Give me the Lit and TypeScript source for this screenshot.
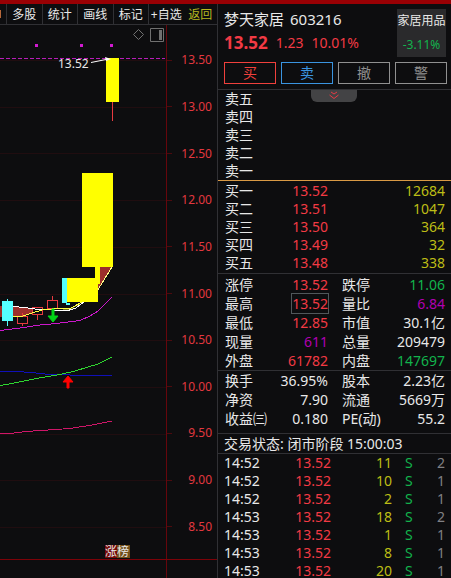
import { LitElement, html, css, svg } from "lit";
import { customElement } from "lit/decorators.js";

const SCALE = ["13.50", "13.00", "12.50", "12.00", "11.50", "11.00", "10.50", "10.00", "9.50", "9.00", "8.50"];

@customElement("price-chart")
class PriceChart extends LitElement {
  static styles = css`
    :host { display: flex; flex: 1; min-height: 0; }
    .plot { flex: 1; min-width: 0; display: block; height: 100%; }
    .axis {
      flex: none; width: 50px; box-sizing: content-box; border-left: 1px solid #66060c;
      display: flex; flex-direction: column; padding: 12px 0 9px; margin: 0; list-style: none;
    }
    .level {
      flex: 1; display: flex; align-items: center; justify-content: space-between;
      padding-right: 5px; color: #e2383f; font-size: 12px; line-height: 16px;
    }
    .level::before { content: ""; width: 5px; height: 1px; background: #4c0a0e; }
    text { font-size: 12px; fill: #e8e8e8; }
  `;
  render() {
    return html`
      <svg class="plot" viewBox="0 25 166 534" role="img" aria-label="K线图">
        <g stroke="#200d10">
          ${SCALE.map((_, i) => svg`<line x1="0" x2="166" y1=${Math.round(60 + i * 46.7) + 0.5} y2=${Math.round(60 + i * 46.7) + 0.5}></line>`)}
        </g>
        <g fill="none" stroke="#707070">
          <path d="M138.5 29.5l5 5-5 5-5-5z"></path>
          <path d="M150.5 28.5h13v13h-13z"></path>
          <path d="M159 30h3v10h-3z" fill="#707070" stroke="none"></path>
        </g>
        <path d="M0 58.5H165" stroke="#b81cb8" stroke-dasharray="4 2"></path>
        <path d="M35 44h3v3h-3zM80 44h3v3h-3zM110 44h3v3h-3z" fill="#d21ad2"></path>
        <path d="M112.5 102V121" stroke="#e83a40"></path>
        <path d="M106 58h13v44h-13z" fill="#ff0"></path>
        <text x="58" y="68">13.52</text>
        <path d="M91 62.5L106 59.5" stroke="#fff"></path>
        <path d="M105 57l6 2-5 2z" fill="#fff"></path>

        <g shape-rendering="crispEdges">
          <path d="M0 306L13 307 25 308 43 310 22 316 0 317z" fill="#9c2f2b"></path>
          <path d="M55 309L72 308 84 302 70 310z" fill="#6c7017"></path>
          <path d="M100 267H112L98 289z" fill="#9c2f2b"></path>
          <path d="M7.5 299V326" stroke="#54ffff"></path>
          <path d="M2 301h11v20h-11z" fill="#54ffff"></path>
          <g fill="#0d0d0f" stroke="#e83a40">
            <path d="M22.5 313V326M37.5 314V320M52.5 296V300"></path>
            <path d="M17.5 316.5h10v7h-10zM32.5 307.5h10v7h-10zM47.5 300.5h10v8h-10z"></path>
          </g>
          <path d="M13 306.500L25 307.500 38 309.500 68 310.500 76 308 84 302" fill="none" stroke="#fff"></path>
          <path d="M13 317L23 316 32 313 44 309.500 60 308.500 70 308.500 84 301" fill="none" stroke="#ff4"></path>
          <path d="M98 289.500L112 267" stroke="#ff8"></path>
          <path d="M62 278h5v25h-5zM66 303h4v2h-4z" fill="#54ffff"></path>
          <path d="M82 173h31v94h-13v17h-2v18h-31v-24h28v-11h-13z" fill="#ff0"></path>
          <path d="M0 330.500L20 328 40 325 56 323.500 80 320.500 90 316 98 311 112 297" fill="none" stroke="#cb18cb"></path>
          <path d="M0 371.500H18L36 373 50 374.500H60L80 375.500H112" fill="none" stroke="#1010b8"></path>
          <path d="M0 385.500L12 383.500 36 378.500 60 374.500 75 371 98 364 112 357" fill="none" stroke="#2fd62f"></path>
          <path d="M0 433.500H10L26 431.500 70 428.500 92 425 112 421" fill="none" stroke="#cf1668"></path>
        </g>
        <path d="M52 309h2v7h4l-5 6-5-6h4z" fill="#00d416" stroke="#00d416"></path>
        <path d="M68 376l5 6h-4v6h-2v-6h-4z" fill="#f00" stroke="#f00"></path>

        <path d="M105 545h12v13h-12z" fill="#740a08"></path>
        <path d="M117 545h13v13h-13z" fill="#72501c"></path>
        <text x="105" y="556">涨榜</text>
      </svg>
      <ul class="axis">${SCALE.map((v) => html`<li class="level">${v}</li>`)}</ul>
    `;
  }
}

const SELLS = ["卖五", "卖四", "卖三", "卖二", "卖一"];
const BUYS = [
  ["买一", "13.52", "12684"],
  ["买二", "13.51", "1047"],
  ["买三", "13.50", "364"],
  ["买四", "13.49", "32"],
  ["买五", "13.48", "338"],
];
const DAY = [
  ["涨停", "13.52", "red", "跌停", "11.06", "green"],
  ["最高", "13.52", "red boxed", "量比", "6.84", "purple"],
  ["最低", "12.85", "red", "市值", "30.1亿", ""],
  ["现量", "611", "purple", "总量", "209479", ""],
  ["外盘", "61782", "red", "内盘", "147697", "green"],
];
const BASICS = [
  ["换手", "36.95%", "", "股本", "2.23亿", ""],
  ["净资", "7.90", "", "流通", "5669万", ""],
  ["收益㈢", "0.180", "", "PE(动)", "55.2", ""],
];
const TICKS = [
  ["14:52", "13.52", "11", "2"],
  ["14:52", "13.52", "10", "1"],
  ["14:52", "13.52", "2", "1"],
  ["14:53", "13.52", "18", "2"],
  ["14:53", "13.52", "1", "1"],
  ["14:53", "13.52", "8", "1"],
  ["14:53", "13.52", "20", "1"],
];

@customElement("quote-panel")
class QuotePanel extends LitElement {
  static styles = css`
    :host { display: block; min-width: 0; overflow: hidden; border-left: 1px solid #303034; font-size: 14px; }
    .head { display: flex; justify-content: space-between; padding: 5px 5px 0 6px; height: 53px; box-sizing: border-box; }
    .name { display: flex; gap: 6px; margin: 0; font-size: 15px; font-weight: 400; line-height: 20px; white-space: nowrap; }
    .prices { display: flex; align-items: center; gap: 8px; line-height: 20px; margin-top: 4px; color: #f23a44; }
    .last { font-size: 17px; font-weight: 700; }
    .sector {
      width: 49px; height: 48px; background: #2a2a2c; font-size: 12px; line-height: 24px;
      text-align: center; white-space: nowrap;
    }
    .actions { display: grid; grid-template-columns: repeat(4, 1fr); gap: 5px; padding: 5px 4px 5px 6px; }
    .action {
      height: 22px; padding: 0; background: none; border: 1px solid #909090; color: #909090;
      font: inherit; line-height: 20px;
    }
    .buy { color: #f0403c; border-color: #f0403c; }
    .sell { color: #3a94e0; border-color: #3a94e0; }
    .book, .stats, .status { border-top: 1px solid #303034; }
    .book { position: relative; }
    .fold {
      position: absolute; top: 0; left: 93px; width: 46px; height: 12px; padding: 0; border: 0;
      border-radius: 0 0 6px 6px; background: #434345; display: flex; justify-content: center;
    }
    table { width: 100%; border-collapse: collapse; table-layout: fixed; }
    th, td { padding: 0; height: 18px; line-height: 18px; font-weight: 400; text-align: right; white-space: nowrap; }
    th { text-align: left; }
    .bids { border-top: 1px solid #d99a45; padding: 1px 0; }
    .asks, .bids, .stats { padding-left: 7px; padding-right: 6px; }
    .key { width: 50px; }
    .mid { width: 53px; }
    .key2 { width: 45px; padding-left: 14px; }
    .stats th, .stats td { height: 19px; line-height: 19px; }
    .day { padding-top: 1px; }
    .basics { padding-bottom: 5px; }
    .boxed span { outline: 1px solid #50575a; }
    .red { color: #f23a44; }
    .green { color: #12b34c; }
    .purple { color: #b100b1; }
    .yellow { color: #bdbd16; }
    .grey { color: #808084; }
    .status { margin: 0; padding-left: 6px; line-height: 19px; border-bottom: 1px solid #303034; white-space: nowrap; }
    .ticks { padding: 0 6px; }
    .ticks th, .ticks td { line-height: 14px; }
    .time { width: 50px; }
    .deal { width: 57px; }
    .lots { width: 61px; }
    .side { width: 20px; padding-left: 13px; text-align: left; }
  `;
  stats(rows: string[][]) {
    return html`<table>
      ${rows.map(
        ([a, b, bc, c, d, dc]) => html`<tr>
          <th class="key" scope="row">${a}</th><td class="mid ${bc}"><span>${b}</span></td>
          <th class="key2" scope="row">${c}</th><td class=${dc}>${d}</td>
        </tr>`
      )}
    </table>`;
  }
  render() {
    return html`
      <header class="head">
        <div>
          <h1 class="name"><span>梦天家居</span><span>603216</span></h1>
          <div class="prices"><span class="last">13.52</span><span>1.23</span><span>10.01%</span></div>
        </div>
        <div class="sector"><div>家居用品</div><div class="green">-3.11%</div></div>
      </header>
      <div class="actions">
        <button class="action buy">买</button><button class="action sell">卖</button>
        <button class="action">撤</button><button class="action">警</button>
      </div>
      <section class="book">
        <div class="asks"><table>${SELLS.map((s) => html`<tr><th scope="row">${s}</th></tr>`)}</table></div>
        <button class="fold" aria-label="收起">
          <svg width="12" height="10" viewBox="0 0 12 10" fill="none" stroke="#e83a44">
            <path d="M3 2l3 2 3-2M1.500 5L6 8.500 10.500 5"></path>
          </svg>
        </button>
        <div class="bids"><table>
          ${BUYS.map(([k, p, v]) => html`<tr><th class="key" scope="row">${k}</th><td class="mid red">${p}</td><td class="yellow">${v}</td></tr>`)}
        </table></div>
      </section>
      <section class="stats day">${this.stats(DAY)}</section>
      <section class="stats basics">${this.stats(BASICS)}</section>
      <p class="status">交易状态: 闭市阶段 15:00:03</p>
      <section class="ticks"><table>
        ${TICKS.map(
          ([t, p, v, n]) => html`<tr>
            <th class="time" scope="row">${t}</th><td class="deal red">${p}</td>
            <td class="lots yellow">${v}</td><td class="side green">S</td><td class="grey">${n}</td>
          </tr>`
        )}
      </table></section>
    `;
  }
}

@customElement("app-root")
class AppRoot extends LitElement {
  static styles = css`
    :host {
      display: grid; grid-template-columns: minmax(0, 217fr) minmax(0, 234fr); grid-template-rows: minmax(0, 1fr);
      height: 100vh; box-sizing: border-box; border-top: 4px solid #980004; overflow: hidden;
      background: #0d0d0f; color: #e8e8e8; font-family: "Noto Sans", "Noto Sans CJK SC", sans-serif;
    }
    .left { display: flex; flex-direction: column; min-width: 0; }
    .tools { display: flex; height: 20px; border-bottom: 1px solid #303034; }
    .tool {
      flex: 35 1 0; min-width: 0; padding: 0; border: 0; border-left: 1px solid #303034; background: none;
      color: inherit; font: inherit; font-size: 12px; line-height: 19px; white-space: nowrap;
    }
    .edge { flex: none; width: 6px; display: flex; align-items: center; }
    .edge::before { content: ""; width: 1px; height: 8px; background: #b8683a; }
    .back { flex-grow: 34; border: 0; color: #b8b820; }
    .foot { height: 18px; border-top: 1px solid #7c0208; display: flex; justify-content: flex-end; }
    .foot::before { content: ""; width: 50px; border-left: 1px solid #66060c; }
  `;
  render() {
    return html`
      <div class="left">
        <nav class="tools">
          <span class="edge"></span>
          ${["多股", "统计", "画线", "标记", "+自选"].map((t) => html`<button class="tool">${t}</button>`)}
          <button class="tool back">返回</button>
        </nav>
        <price-chart></price-chart>
        <div class="foot"></div>
      </div>
      <quote-panel></quote-panel>
    `;
  }
}
